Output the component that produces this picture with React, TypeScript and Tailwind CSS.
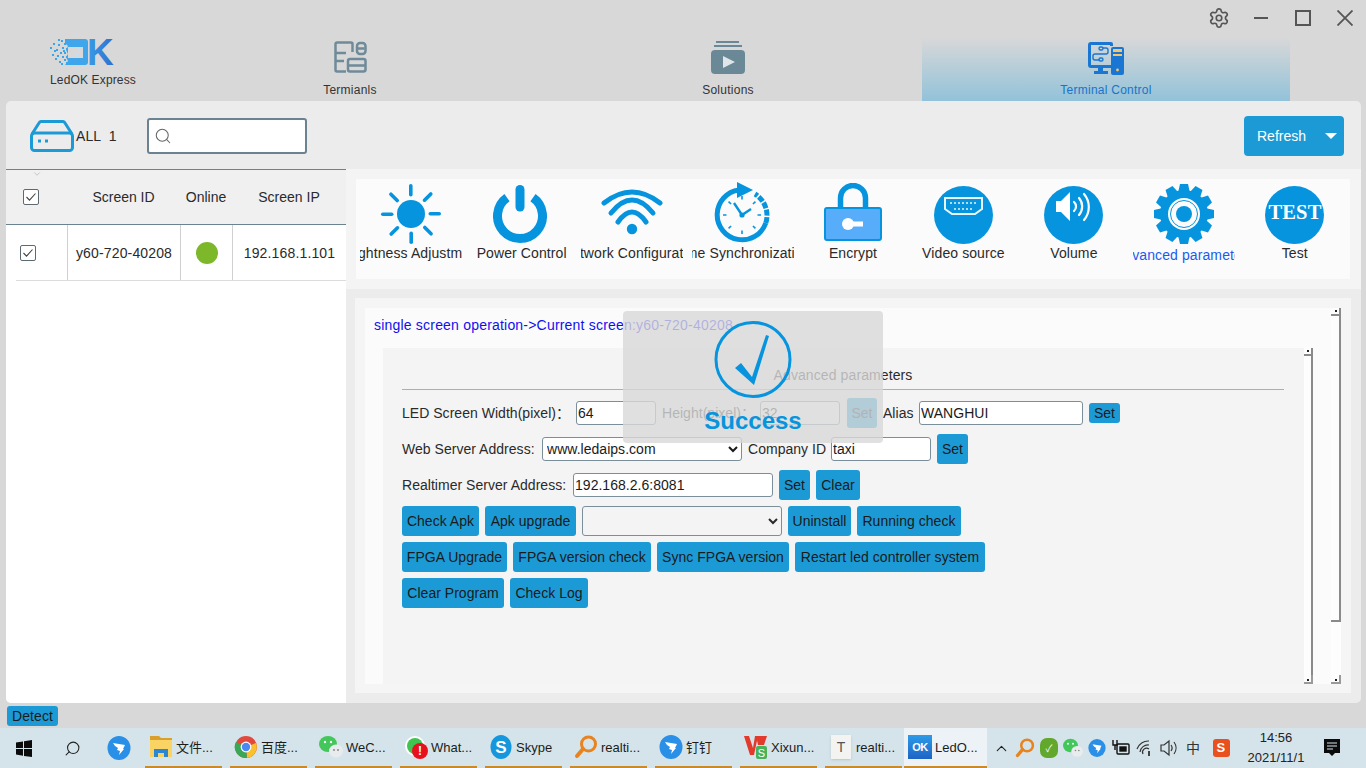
import { ChevronDown, Search, Settings } from 'lucide-react'
import type { ReactNode } from 'react'

const BLUE = '#0694de'

function LogoMark() {
  const dots = [
    [0, 9], [3, 5], [6, 11], [2, 16], [8, 6], [10, 14], [5, 20], [9, 23], [12, 18], [12, 9],
    [14, 21], [7, 17], [11, 2], [14, 5], [14, 14], [16, 24], [4, 12], [11, 25], [8, 1], [13, 12],
    [16, 18], [16, 10],
  ]
  return (
    <svg width="66" height="28" viewBox="0 0 66 28">
      <defs>
        <linearGradient id="lg" x1="0" x2="1">
          <stop offset="0" stopColor="#3a9ce8" />
          <stop offset="1" stopColor="#2c6fd0" />
        </linearGradient>
      </defs>
      {dots.map(([x, y]) => (
        <rect key={`${x}-${y}`} x={x} y={y} width="2" height="2" fill="#3aa5ea" />
      ))}
      <path fillRule="evenodd" d="M15 1h20a3 3 0 0 1 3 3v20a3 3 0 0 1-3 3H15l3-4-2-4 2-3-2-4 2-4-3-3zM18 9v11h15V9z" fill="#3fa6ec" />
      <path d="M26 20v-4h4M29 9v4" stroke="#bfe2f8" strokeWidth="1" fill="none" />
      <text x="37" y="27" fontFamily="'Liberation Sans', sans-serif" fontWeight="700" fontSize="37" fill="url(#lg)">
        K
      </text>
    </svg>
  )
}

function TerminalsIcon() {
  return (
    <svg width="33" height="32" viewBox="0 0 33 32" fill="none" stroke="#6f8a98" strokeWidth="2.5">
      <path d="M12 30.5H3a1.5 1.5 0 0 1-1.5-1.5V3A1.5 1.5 0 0 1 3 1.5h14A1.5 1.5 0 0 1 18.5 3v8" />
      <path d="M2 12h10M2 20h8" />
      <rect x="23" y="2" width="8.5" height="11" rx="3" />
      <path d="M24 7.5h6.5" />
      <rect x="14" y="18" width="17.5" height="12.5" rx="2" />
      <path d="M14 24.5h17.5" />
    </svg>
  )
}

function SolutionsIcon() {
  return (
    <svg width="34" height="33" viewBox="0 0 34 33" fill="#6b8897">
      <rect x="5" y="0" width="23" height="2" />
      <rect x="3" y="4" width="28" height="2" />
      <rect x="0" y="9" width="34" height="24" rx="4" />
      <path d="M12 15l12 6-12 6z" fill="#dfe5e8" />
    </svg>
  )
}

function TerminalControlIcon() {
  return (
    <svg width="38" height="33" viewBox="0 0 36 33">
      <path d="M3 0h20a2 2 0 0 1 2 2v2h-3V3H3v20h21v3H3a3 3 0 0 1-3-3V3a3 3 0 0 1 3-3z" fill="#1976d2" />
      <path d="M10 26h5v3h5v3H6v-3h4z" fill="#1976d2" />
      <rect x="23" y="5" width="13" height="28" rx="2" fill="#1976d2" />
      <rect x="25" y="7" width="9" height="3" fill="#f6c667" />
      <rect x="25" y="12" width="9" height="2" fill="#f6c667" />
      <circle cx="29.5" cy="28" r="1.4" fill="#f6c667" />
      <g fill="none" stroke="#1976d2" strokeWidth="1.4">
        <rect x="11" y="5" width="4" height="3" rx="1.5" />
        <path d="M15 6h3a2 2 0 0 1 2 2v2a2 2 0 0 1-2 2H7a2 2 0 0 0-2 2v2a2 2 0 0 0 2 2h5" />
        <rect x="11" y="16" width="4" height="3" rx="1.5" />
      </g>
    </svg>
  )
}

function DeviceIcon() {
  return (
    <svg width="44" height="32" viewBox="0 0 44 32" fill="none" stroke="#1c9ad6" strokeWidth="3">
      <path d="M2 14L9 3a3 3 0 0 1 2-1.5h22a3 3 0 0 1 2 1.5l7 11" />
      <rect x="1.5" y="13" width="41" height="17.5" rx="3" />
      <rect x="8" y="19.5" width="3" height="3" fill="#1c9ad6" strokeWidth="0" />
      <rect x="15" y="19.5" width="3" height="3" fill="#1c9ad6" strokeWidth="0" />
    </svg>
  )
}

function CheckBox() {
  return (
    <svg width="16" height="16" viewBox="0 0 16 16" fill="none">
      <rect x="0.5" y="0.5" width="15" height="15" rx="1.5" stroke="#5d6a72" fill="#fff" />
      <path d="M3.5 8l3 3.2L12.5 4.5" stroke="#444" strokeWidth="1.1" />
    </svg>
  )
}

function SunIcon() {
  const angles = [0, 45, 90, 135, 180, 225, 270, 315]
  return (
    <svg width="62" height="62" viewBox="0 0 62 62" fill={BLUE}>
      <circle cx="31" cy="31" r="14" />
      {angles.map((a) => (
        <rect key={a} x="29" y="1" width="3.6" height="12.5" rx="1.8" transform={`rotate(${a} 31 31)`} />
      ))}
    </svg>
  )
}

function PowerIcon() {
  return (
    <svg width="54" height="58" viewBox="0 0 54 58" fill="none" stroke={BLUE}>
      <path d="M14 12.6A22.5 22.5 0 1 0 40 12.6" strokeWidth="9" />
      <path d="M27 4.5V22" strokeWidth="9" strokeLinecap="round" />
    </svg>
  )
}

function WifiIcon() {
  return (
    <svg width="62" height="46" viewBox="0 0 62 46" fill="none" stroke={BLUE} strokeWidth="5" strokeLinecap="round">
      <path d="M3 14Q31 -8 59 14" />
      <path d="M10 24Q31 -2 52 24" />
      <path d="M17 33Q31 13 45 33" />
      <circle cx="31" cy="40" r="5.2" fill={BLUE} stroke="none" />
    </svg>
  )
}

function ClockIcon() {
  const ticks = [0, 45, 90, 135, 180, 225, 270, 315]
  return (
    <svg width="58" height="64" viewBox="0 0 58 64" fill="none" stroke={BLUE}>
      <path d="M26 8A25 25 0 1 0 52.8 41" strokeWidth="5" />
      <path d="M24 0l16 8-16 8z" fill={BLUE} stroke="none" />
      <path d="M52.8 41A25 25 0 0 0 42 12" strokeWidth="5" strokeDasharray="6 1.5" />
      {ticks.map((a) => (
        <path key={a} d="M29 14v3.5" strokeWidth="1.6" transform={`rotate(${a} 29 33)`} />
      ))}
      <path d="M29 33L21 21M29 33L38 27" strokeWidth="2.4" />
      <circle cx="29" cy="33" r="2.6" fill={BLUE} stroke="none" />
    </svg>
  )
}

function LockIcon() {
  return (
    <svg width="58" height="58" viewBox="0 0 58 58">
      <path d="M16.5 26V15a12.5 12.5 0 0 1 25 0V26" fill="none" stroke={BLUE} strokeWidth="5.5" />
      <rect x="1" y="25" width="56" height="32" rx="2" fill="#58adfb" stroke={BLUE} strokeWidth="2" />
      <circle cx="24" cy="41" r="6" fill="#fff" />
      <rect x="26" y="38.5" width="13" height="5" fill="#fff" />
    </svg>
  )
}

function VideoIcon() {
  return (
    <svg width="59" height="58" viewBox="0 0 59 58">
      <ellipse cx="29.5" cy="29" rx="29.5" ry="29" fill={BLUE} />
      <path d="M11 12h37v11l-7 5H18l-7-5z" fill="none" stroke="#e9f5fc" strokeWidth="2" />
      <path d="M16 17h27M20 23h19" stroke="#e9f5fc" strokeWidth="1.6" strokeDasharray="2 2" />
    </svg>
  )
}

function VolumeIcon() {
  return (
    <svg width="59" height="58" viewBox="0 0 59 58">
      <ellipse cx="29.5" cy="29" rx="29.5" ry="29" fill={BLUE} />
      <path d="M12 15h5l9-9v29l-9-9h-5z" fill="#fff" />
      <g fill="none" stroke="#fff" strokeWidth="2.2" strokeLinecap="round">
        <path d="M30 16a6 6 0 0 1 0 9" />
        <path d="M35 12a13 13 0 0 1 0 17" />
        <path d="M40 8a20 20 0 0 1 0 26" />
      </g>
    </svg>
  )
}

function GearIcon() {
  const teeth = [0, 30, 60, 90, 120, 150, 180, 210, 240, 270, 300, 330]
  return (
    <svg width="62" height="62" viewBox="0 0 62 62">
      <circle cx="31" cy="31" r="24" fill={BLUE} />
      {teeth.map((a) => (
        <path key={a} d="M27 1h8l2 9H25z" fill={BLUE} transform={`rotate(${a} 31 31)`} />
      ))}
      <circle cx="31" cy="31" r="16" fill="#fbfbfb" />
      <circle cx="31" cy="31" r="13.5" fill="none" stroke={BLUE} strokeWidth="1" />
      <circle cx="31" cy="31" r="8" fill={BLUE} />
    </svg>
  )
}

function TestIcon() {
  return (
    <svg width="59" height="58" viewBox="0 0 59 58">
      <ellipse cx="29.5" cy="29" rx="29.5" ry="29" fill={BLUE} />
      <text x="30" y="33" textAnchor="middle" fill="#fff" fontFamily="'Liberation Serif', serif" fontWeight="700" fontSize="20.5">
        TEST
      </text>
    </svg>
  )
}

const tools: { label: string; icon: ReactNode; shift?: string; active?: boolean }[] = [
  { label: 'Brightness Adjustment', icon: <SunIcon /> },
  { label: 'Power Control', icon: <PowerIcon />, shift: '-mt-[1px] -ml-[3px]' },
  { label: 'Network Configuration', icon: <WifiIcon />, shift: '-mt-[5px]' },
  { label: 'Time Synchronization', icon: <ClockIcon />, shift: '-mt-[1px] -ml-[2px]' },
  { label: 'Encrypt', icon: <LockIcon />, shift: '-mt-[5px]' },
  { label: 'Video source', icon: <VideoIcon />, shift: 'mt-[2px]' },
  { label: 'Volume', icon: <VolumeIcon />, shift: 'mt-[2px]' },
  { label: 'Advanced parameters', icon: <GearIcon />, active: true },
  { label: 'Test', icon: <TestIcon />, shift: 'mt-[2px]' },
]

function Btn({ children, className = '' }: { children: ReactNode; className?: string }) {
  return (
    <button className={`h-[30px] shrink-0 rounded-[3px] bg-[#1c9ad6] text-center text-[14px] whitespace-nowrap text-[#1a1a1a] ${className}`}>
      {children}
    </button>
  )
}

function Field({ value, width }: { value: string; width: string }) {
  return (
    <input
      readOnly
      value={value}
      className={`h-[24px] shrink-0 rounded-[3px] border border-[#7b8f9b] bg-white px-[1px] text-[14px] text-[#1a1a1a] outline-none ${width}`}
    />
  )
}

function Row({ children }: { children: ReactNode }) {
  return <div className="flex h-[36px] items-center gap-[6px] tracking-[0.03px]">{children}</div>
}

function Scrollbar({ short, width }: { short?: boolean; width: string }) {
  return (
    <div className={`flex shrink-0 flex-col bg-[#fdfdfd] ${width}`}>
      <div className="flex h-[8px] shrink-0 justify-end border-r-2 border-b-2 border-[#8a8a8a] pt-[2px] pr-[2px]">
        <div className="h-[2px] w-[2px] bg-[#222]" />
      </div>
      {short ? (
        <>
          <div className="h-[306px] shrink-0 border-r-2 border-b-2 border-[#8a8a8a]" />
          <div className="flex-1" />
        </>
      ) : (
        <div className="flex-1 border-r-2 border-[#8a8a8a]" />
      )}
      <div className="flex h-[9px] shrink-0 items-end justify-end border-r-2 border-b-2 border-[#9a9a9a] pr-[2px] pb-[1px]">
        <div className="h-[2px] w-[2px] bg-[#222]" />
      </div>
    </div>
  )
}

type TaskItem = { label: string; icon: ReactNode }

function DingIcon({ size = 24 }: { size?: number }) {
  return (
    <svg width={size} height={size} viewBox="0 0 24 24">
      <ellipse cx="12" cy="12" rx="11.5" ry="12" fill="#2a8fe6" />
      <path d="M6 7l12 2-2 4 1 0-5 6 1-4-3-1 1-2-3-2z" fill="#fff" />
    </svg>
  )
}

function MiniWeChat({ size = 24 }: { size?: number }) {
  return (
    <svg width={size} height={size} viewBox="0 0 24 24">
      <ellipse cx="9" cy="9" rx="9" ry="8" fill="#43c65a" />
      <circle cx="6" cy="7" r="1.2" fill="#fff" />
      <circle cx="12" cy="7" r="1.2" fill="#fff" />
      <ellipse cx="17" cy="16" rx="7" ry="6.5" fill="#e9ecee" />
      <circle cx="15" cy="15" r="1" fill="#888" />
      <circle cx="19" cy="15" r="1" fill="#888" />
    </svg>
  )
}

function MiniSearch({ size = 24 }: { size?: number }) {
  return (
    <svg width={size} height={size} viewBox="0 0 24 24" fill="none" stroke="#e8831e" strokeWidth="3">
      <circle cx="14.5" cy="9" r="7" />
      <path d="M9 14l-6 7" strokeLinecap="round" strokeWidth="4" />
    </svg>
  )
}

const taskItems: TaskItem[] = [
  {
    label: '文件...',
    icon: (
      <svg width="22" height="24" viewBox="0 0 22 24">
        <path d="M0 1h9l2 2h11v4H0z" fill="#d9a02c" />
        <path d="M0 5h22v17H0z" fill="#f9d465" />
        <path d="M4 14h14v8h-4v-4H8v4H4z" fill="#2b87d3" />
      </svg>
    ),
  },
  {
    label: '百度...',
    icon: (
      <svg width="24" height="24" viewBox="0 0 24 24">
        <circle cx="12" cy="12" r="11" fill="#e2483b" />
        <path d="M12 12L22 8a11 11 0 0 1-9 15z" fill="#fbc02d" />
        <path d="M12 12l1 11A11 11 0 0 1 2 7z" fill="#3aa757" />
        <circle cx="12" cy="12" r="5.4" fill="#fff" />
        <circle cx="12" cy="12" r="4.2" fill="#4a89f3" />
      </svg>
    ),
  },
  { label: 'WeC...', icon: <MiniWeChat /> },
  {
    label: 'What...',
    icon: (
      <span className="relative block h-[24px] w-[24px]">
        <svg width="24" height="24" viewBox="0 0 24 24">
          <circle cx="11" cy="11" r="10" fill="#fff" />
          <circle cx="11" cy="11" r="8" fill="#3fc351" />
        </svg>
        <span className="absolute top-[8px] left-[8px] flex h-[16px] w-[16px] items-center justify-center rounded-full bg-[#e8111b] text-[12px] font-bold text-white">
          !
        </span>
      </span>
    ),
  },
  {
    label: 'Skype',
    icon: (
      <svg width="22" height="24" viewBox="0 0 22 24">
        <ellipse cx="11" cy="12" rx="10.5" ry="12" fill="#1597dd" />
        <text x="11" y="18" textAnchor="middle" fontSize="17" fontWeight="700" fill="#fff" fontFamily="'Liberation Sans', sans-serif">
          S
        </text>
      </svg>
    ),
  },
  { label: 'realti...', icon: <MiniSearch /> },
  { label: '钉钉', icon: <DingIcon /> },
  {
    label: 'Xixun...',
    icon: (
      <svg width="24" height="24" viewBox="0 0 24 24">
        <path d="M0 1h5l4 12 2-12h3L10 20H6z" fill="#e23b2e" />
        <path d="M12 1h11l-3 9h-6z" fill="#e23b2e" />
        <rect x="12" y="11" width="11" height="13" rx="2" fill="#49b35b" />
        <text x="17.5" y="22" textAnchor="middle" fontSize="11" fill="#fff" fontFamily="'Liberation Sans', sans-serif">
          S
        </text>
      </svg>
    ),
  },
  {
    label: 'realti...',
    icon: (
      <span className="flex h-[24px] w-[20px] items-center justify-center bg-[#f3f3f1] text-[14px] text-[#555] shadow-sm">T</span>
    ),
  },
]

function LedOkTaskIcon() {
  return (
    <span className="flex h-[24px] w-[24px] items-center justify-center bg-linear-to-b from-[#2d9be8] to-[#1f63c5] text-[11px] font-bold tracking-tighter text-white">
      OK
    </span>
  )
}

function TaskButton({ item, active }: { item: TaskItem; active?: boolean }) {
  return (
    <div
      className={`flex h-full shrink-0 items-center gap-[3px] border-b-2 border-[#c98a2c] pl-[4px] ${
        active ? 'w-[83px] bg-[#ecf2f5]' : 'mr-[8px] w-[77px]'
      }`}
    >
      <span className="flex w-[24px] shrink-0 justify-center">{item.icon}</span>
      <span className="pt-[2px] text-[13px] tracking-normal whitespace-nowrap text-[#1c1c1c]">{item.label}</span>
    </div>
  )
}

function TrayCell({ children, className = '' }: { children: ReactNode; className?: string }) {
  return <div className={`flex w-[24px] shrink-0 items-center justify-center ${className}`}>{children}</div>
}

function Taskbar() {
  return (
    <div className="flex h-[40px] items-center bg-[#d5e4ea]">
      <div className="flex w-[48px] justify-center">
        <svg width="16" height="17" viewBox="0 0 16 17" fill="#0b0b0b">
          <path d="M0 2.5L7 1.4v6.7H0zM8 1.2L16 0v8.1H8zM0 9h7v6.7L0 14.6zM8 9h8v8L8 15.9z" />
        </svg>
      </div>
      <div className="flex w-[48px] justify-center">
        <Search className="h-[17px] w-[17px] -scale-x-100 text-[#222]" strokeWidth={1.5} />
      </div>
      <div className="mr-[4px] flex w-[45px] justify-center">
        <DingIcon />
      </div>
      <div className="flex h-full">
        {taskItems.map((t, i) => (
          <TaskButton key={i} item={t} />
        ))}
      </div>
      <div className="-ml-[6px] h-full">
        <TaskButton item={{ label: 'LedO...', icon: <LedOkTaskIcon /> }} active />
      </div>
      <div className="ml-[2px] flex h-full items-center">
        <TrayCell>
          <ChevronDown className="h-[17px] w-[17px] rotate-180 text-[#222]" strokeWidth={1.6} />
        </TrayCell>
        <TrayCell><MiniSearch size={20} /></TrayCell>
        <TrayCell>
          <span className="flex h-[20px] w-[18px] items-center justify-center rounded-[7px] bg-[#62a82c] text-[10px] text-white">✓</span>
        </TrayCell>
        <TrayCell><MiniWeChat size={20} /></TrayCell>
        <TrayCell><DingIcon size={18} /></TrayCell>
        <TrayCell>
          <svg width="18" height="18" viewBox="0 0 18 18" fill="none" stroke="#111" strokeWidth="1.4">
            <rect x="5" y="5" width="12" height="10" rx="1" />
            <rect x="8" y="8" width="6" height="4" fill="#111" />
            <path d="M1 1v5h4V1M3 6v5" />
          </svg>
        </TrayCell>
        <TrayCell>
          <svg width="18" height="18" viewBox="0 0 18 18" fill="none" stroke="#333" strokeWidth="1.2">
            <path d="M1 10a12 12 0 0 1 12-8M4 13a8 8 0 0 1 9-7M7 15a4 4 0 0 1 6-5" />
            <path d="M13 12v5" strokeWidth="1.8" />
          </svg>
        </TrayCell>
        <TrayCell>
          <svg width="18" height="18" viewBox="0 0 18 18" fill="none" stroke="#333" strokeWidth="1.2">
            <path d="M1 6h3l5-4v14l-5-4H1z" />
            <path d="M11 6a5 5 0 0 1 0 6M14 3a10 10 0 0 1 0 12" />
          </svg>
        </TrayCell>
        <TrayCell className="text-[14px] text-[#333]">中</TrayCell>
        <TrayCell className="ml-[4px]">
          <span className="flex h-[18px] w-[17px] items-center justify-center rounded-[3px] bg-[#ea4f1e] text-[13px] font-bold text-white">S</span>
        </TrayCell>
        <div className="ml-[7px] flex w-[72px] flex-col items-center text-[13px] leading-[20px] tracking-normal text-[#222]">
          <span>14:56</span>
          <span>2021/11/1</span>
        </div>
        <TrayCell className="ml-[8px]">
          <svg width="16" height="18" viewBox="0 0 16 18" fill="#0b0b0b">
            <path d="M0 0h16v14h-5l-3 3-3-3H0z" />
            <path d="M3 4h10M3 7h10M3 10h6" stroke="#d5e4ea" strokeWidth="1" />
          </svg>
        </TrayCell>
      </div>
    </div>
  )
}

export default function App() {
  return (
    <div
      className="relative flex h-[768px] w-[1366px] flex-col overflow-hidden bg-[#d8d8d8] text-[14px] tracking-[0.1px] text-[#2a2a2a]"
      style={{ fontFamily: "'Liberation Sans', 'Noto Sans CJK SC', sans-serif" }}
    >
      {/* header */}
      <div className="flex h-[37px] items-center justify-end pb-[2px]">
        <Settings className="h-[22px] w-[22px] text-[#555]" strokeWidth={1.8} />
        <div className="ml-[24px] h-[2px] w-[14px] bg-[#555]" />
        <div className="ml-[27px] h-[16px] w-[16px] border-2 border-[#555]" />
        <svg className="mr-[13px] ml-[26px]" width="16" height="16" viewBox="0 0 16 16" stroke="#555" strokeWidth="1.8">
          <path d="M0.5 0.5l15 15M15.5 0.5l-15 15" />
        </svg>
      </div>
      <div className="flex h-[64px]">
        <div className="flex w-[166px] flex-col pl-[50px]">
          <div className="pt-[1px]">
            <LogoMark />
          </div>
          <span className="mt-[7px] text-[12px] leading-[15px] tracking-[0.15px] text-[#333]">LedOK Express</span>
        </div>
        <div className="flex gap-[10px]">
          <div className="flex w-[368px] flex-col items-center pt-[4px]">
            <TerminalsIcon />
            <span className="mt-[10px] text-[12px] leading-[15px] tracking-[0.25px] text-[#333]">Termianls</span>
          </div>
          <div className="flex w-[368px] flex-col items-center pt-[4px]">
            <SolutionsIcon />
            <span className="mt-[9px] text-[12px] leading-[15px] tracking-[0.25px] text-[#333]">Solutions</span>
          </div>
          <div className="flex w-[368px] flex-col items-center bg-linear-to-b from-[#d8d8d8] to-[#92c2d9] pt-[5px]">
            <TerminalControlIcon />
            <span className="mt-[8px] text-[12px] leading-[15px] tracking-[0.25px] text-[#1a73c8]">Terminal Control</span>
          </div>
        </div>
      </div>

      {/* main panel */}
      <div className="ml-[6px] flex h-[602px] w-[1355px] flex-col overflow-hidden rounded-[5px] bg-[#ececec]">
        <div className="flex h-[68px] shrink-0 items-center pt-[2px] pr-[17px] pl-[24px]">
          <DeviceIcon />
          <span className="ml-[2px] w-[71px] text-[14px] whitespace-pre">ALL  1</span>
          <div className="flex h-[36px] w-[160px] items-center rounded-[3px] border-2 border-[#6b8290] bg-white pl-[5px]">
            <Search className="h-[18px] w-[18px] text-[#666]" strokeWidth={1.4} />
          </div>
          <div className="ml-auto flex h-[40px] w-[100px] items-center rounded-[4px] bg-[#1c9ad6] pl-[13px] tracking-normal text-white">
            <span>Refresh</span>
            <span className="ml-[19px] h-0 w-0 border-x-[6px] border-t-[6px] border-x-transparent border-t-white" />
          </div>
        </div>

        <div className="flex min-h-0 flex-1">
          {/* screen list */}
          <div className="relative flex w-[340px] shrink-0 flex-col border-t border-[#6b8290] bg-white">
            <ChevronDown className="absolute -top-[1px] left-[26px] h-[10px] w-[10px] text-[#888]" strokeWidth={1} />
            <div className="grid h-[55px] grid-cols-[61px_113px_52px_114px] items-center border-b border-[#6b8290] bg-[#f0f0f0] text-center tracking-normal">
              <div className="pl-[17px] text-left"><CheckBox /></div>
              <span>Screen ID</span>
              <span>Online</span>
              <span>Screen IP</span>
            </div>
            <div className="ml-[10px] grid h-[56px] grid-cols-[51px_113px_52px_114px] items-stretch border-b border-[#dcdcdc] text-center tracking-[0.15px]">
              <div className="flex items-center pl-[4px]"><CheckBox /></div>
              <div className="flex items-center justify-center border-l border-[#d0d0d0] pt-[1px]">y60-720-40208</div>
              <div className="flex items-center justify-center border-l border-[#d0d0d0]">
                <div className="h-[22px] w-[22px] rounded-full bg-[#7cb82a]" />
              </div>
              <div className="flex items-center justify-center border-l border-[#d0d0d0] pt-[1px]">192.168.1.101</div>
            </div>
          </div>

          {/* right side */}
          <div className="flex min-w-0 flex-1 flex-col">
            <div className="h-[120px] shrink-0 bg-[#f4f4f4] pt-[10px] pr-[11px] pl-[10px]">
              <div className="grid h-[100px] grid-cols-9 bg-[#fbfbfb]">
                {tools.map((t) => (
                  <div key={t.label} className="flex flex-col items-center">
                    <div className="mt-[2px] flex h-[66px] items-center justify-center">
                      <div className={t.shift}>{t.icon}</div>
                    </div>
                    <div
                      className={`flex w-[102px] justify-center overflow-hidden leading-[20px] whitespace-nowrap ${
                        t.active ? 'mt-[-2px] text-[#1a5cf0]' : 'mt-[-4px]'
                      }`}
                    >
                      <span className="shrink-0">{t.label}</span>
                    </div>
                  </div>
                ))}
              </div>
            </div>

            <div className="mt-[9px] ml-[9px] flex h-[395px] w-[996px] flex-col bg-[#f5f5f5] pt-[10px] pr-[10px] pb-[9px] pl-[10px]">
              <div className="flex min-h-0 flex-1 bg-[#fbfbfb]">
                <div className="flex min-w-0 flex-1 flex-col">
                  <div className="mb-[6px] flex h-[34px] shrink-0 items-center pl-[9px] tracking-[0.2px] text-[#1010f0]">
                    single screen operation-&gt;Current screen:y60-720-40208
                  </div>
                  <div className="ml-[18px] flex min-h-0 flex-1 bg-[#f4f4f4]">
                    <div className="w-[921px] pr-[20px] pl-[19px]">
                      <div className="flex h-[42px] items-center justify-center border-b border-[#a8b0b5] pt-[13px]">
                        Advanced parameters
                      </div>
                      <div className="mt-[5px]">
                        <Row>
                          <span className="w-[168px] whitespace-nowrap">LED Screen Width(pixel)：</span>
                          <Field value="64" width="w-[80px]" />
                          <span className="w-[92px] whitespace-nowrap">Height(pixel)：</span>
                          <Field value="32" width="w-[80px]" />
                          <Btn className="ml-[1px] w-[30px]">Set</Btn>
                          <span className="w-[30px]">Alias</span>
                          <Field value="WANGHUI" width="w-[164px]" />
                          <button className="h-[20px] w-[31px] rounded-[3px] bg-[#1c9ad6] text-[14px] text-[#1a1a1a]">Set</button>
                        </Row>
                        <Row>
                          <span className="w-[134px] whitespace-nowrap">Web Server Address:</span>
                          <select defaultValue="a" className="h-[24px] w-[200px] rounded-[3px] border border-[#7b8f9b] bg-white text-[14px] text-[#1a1a1a]">
                            <option value="a">www.ledaips.com</option>
                          </select>
                          <span className="w-[77px] whitespace-nowrap">Company ID</span>
                          <Field value="taxi" width="w-[100px]" />
                          <Btn className="w-[31px]">Set</Btn>
                        </Row>
                        <Row>
                          <span className="w-[165px] whitespace-nowrap">Realtimer Server Address:</span>
                          <Field value="192.168.2.6:8081" width="w-[200px]" />
                          <Btn className="w-[31px]">Set</Btn>
                          <Btn className="w-[44px]">Clear</Btn>
                        </Row>
                        <Row>
                          <Btn className="w-[77px]">Check Apk</Btn>
                          <Btn className="w-[91px]">Apk upgrade</Btn>
                          <select className="h-[30px] w-[200px] rounded-[3px] border border-[#7b8f9b] bg-[#f4f4f4] text-[14px]">
                            <option></option>
                          </select>
                          <Btn className="w-[63px]">Uninstall</Btn>
                          <Btn className="w-[104px]">Running check</Btn>
                        </Row>
                        <Row>
                          <Btn className="w-[105px]">FPGA Upgrade</Btn>
                          <Btn className="w-[138px]">FPGA version check</Btn>
                          <Btn className="w-[132px]">Sync FPGA version</Btn>
                          <Btn className="w-[190px]">Restart led controller system</Btn>
                        </Row>
                        <Row>
                          <Btn className="w-[102px]">Clear Program</Btn>
                          <Btn className="w-[78px]">Check Log</Btn>
                        </Row>
                      </div>
                    </div>
                    <Scrollbar width="w-[9px]" />
                  </div>
                </div>
                <div className="flex w-[28px] shrink-0 justify-end">
                  <Scrollbar short width="w-[10px]" />
                </div>
              </div>
            </div>
          </div>
        </div>
      </div>

      {/* status */}
      <div className="flex h-[25px] items-center pl-[7px]">
        <button className="h-[20px] w-[51px] rounded-[3px] bg-[#1c9ad6] text-[14px] text-[#1a1a1a]">Detect</button>
      </div>
      <Taskbar />

      {/* success toast */}
      <div className="absolute top-[311px] left-[623px] flex h-[132px] w-[260px] flex-col items-center rounded-[4px] bg-[#d8d8d8]/80">
        <svg className="mt-[10px]" width="78" height="78" viewBox="0 0 78 78" fill="none" stroke="#0694de">
          <ellipse cx="39" cy="38.5" rx="37" ry="37" strokeWidth="3" />
          <path d="M21 47L27 42L38 56L52 14L55 15L40 64Z" fill="#0694de" stroke="none" />
        </svg>
        <span className="mt-[8px] text-[24px] leading-[28px] font-bold tracking-normal text-[#0694de]">Success</span>
      </div>
    </div>
  )
}
